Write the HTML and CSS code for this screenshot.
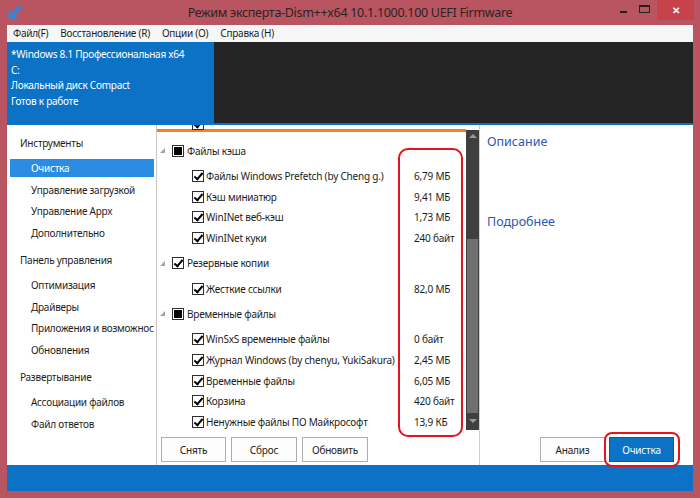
FILE: index.html
```html
<!DOCTYPE html>
<html lang="ru">
<head>
<meta charset="utf-8">
<title>Dism++</title>
<link rel="stylesheet" href="styles.css">
</head>
<body>
<div class="window">
  <div class="titlebar">
    <svg class="appicon" width="20" height="20" viewBox="0 0 20 20">
      <circle cx="6.5" cy="12" r="3.3" fill="#1f8fe6"/>
      <circle cx="6.5" cy="12" r="4.2" fill="none" stroke="#1f8fe6" stroke-width="2" stroke-dasharray="1.65 1.65"/>
      <circle cx="6.5" cy="12" r="1.3" fill="#b85560"/>
      <circle cx="12.5" cy="5.5" r="2.3" fill="#1f8fe6"/>
      <circle cx="12.5" cy="5.5" r="3.1" fill="none" stroke="#1f8fe6" stroke-width="1.6" stroke-dasharray="1.6 1.65"/>
      <circle cx="12.5" cy="5.5" r="0.9" fill="#b85560"/>
    </svg>
    <div class="title">Режим эксперта-Dism++x64 10.1.1000.100 UEFI Firmware</div>
    <div class="controls">
      <span class="ctl-min"></span>
      <span class="ctl-max"></span>
      <span class="ctl-close">✕</span>
    </div>
  </div>
  <div class="frame">
    <div class="menubar">
      <span>Файл(F)</span>
      <span>Восстановление (R)</span>
      <span>Опции (O)</span>
      <span>Справка (H)</span>
    </div>
    <div class="header">
      <div class="info">
        <div>*Windows 8.1 Профессиональная x64</div>
        <div>C:</div>
        <div>Локальный диск Compact</div>
        <div>Готов к работе</div>
      </div>
      <div class="console"></div>
    </div>
    <div class="main">
      <nav class="sidebar">
        <div class="sec">Инструменты</div>
        <div class="item active">Очистка</div>
        <div class="item">Управление загрузкой</div>
        <div class="item">Управление Appx</div>
        <div class="item">Дополнительно</div>
        <div class="sec">Панель управления</div>
        <div class="item">Оптимизация</div>
        <div class="item">Драйверы</div>
        <div class="item">Приложения и возможнос</div>
        <div class="item">Обновления</div>
        <div class="sec">Развертывание</div>
        <div class="item">Ассоциации файлов</div>
        <div class="item">Файл ответов</div>
      </nav>
      <section class="tree">
        <div class="treebox">
          <div class="list">
            <div class="cut"><span class="cb on"></span></div>
            <div class="rows">
              <div class="grp"><span class="exp"></span><span class="cb part"></span><span class="lbl">Файлы кэша</span></div>
              <div class="row"><span class="cb on"></span><span class="lbl">Файлы Windows Prefetch (by Cheng g.)</span><span class="size">6,79 МБ</span></div>
              <div class="row"><span class="cb on"></span><span class="lbl">Кэш миниатюр</span><span class="size">9,41 МБ</span></div>
              <div class="row"><span class="cb on"></span><span class="lbl">WinINet веб-кэш</span><span class="size">1,73 МБ</span></div>
              <div class="row"><span class="cb on"></span><span class="lbl">WinINet куки</span><span class="size">240 байт</span></div>
              <div class="grp"><span class="exp"></span><span class="cb on"></span><span class="lbl">Резервные копии</span></div>
              <div class="row"><span class="cb on"></span><span class="lbl">Жесткие ссылки</span><span class="size">82,0 МБ</span></div>
              <div class="grp"><span class="exp"></span><span class="cb part"></span><span class="lbl">Временные файлы</span></div>
              <div class="row"><span class="cb on"></span><span class="lbl">WinSxS временные файлы</span><span class="size">0 байт</span></div>
              <div class="row"><span class="cb on"></span><span class="lbl">Журнал Windows (by chenyu, YukiSakura)</span><span class="size">2,45 МБ</span></div>
              <div class="row"><span class="cb on"></span><span class="lbl">Временные файлы</span><span class="size">6,05 МБ</span></div>
              <div class="row"><span class="cb on"></span><span class="lbl">Корзина</span><span class="size">420 байт</span></div>
              <div class="row"><span class="cb on"></span><span class="lbl">Ненужные файлы ПО Майкрософт</span><span class="size">13,9 КБ</span></div>
            </div>
          </div>
          <div class="scroll">
            <span class="arr up"></span>
            <span class="thumb"></span>
            <span class="arr down"></span>
          </div>
          <div class="mark"></div>
        </div>
        <div class="btnrow">
          <button class="btn first">Снять</button>
          <button class="btn">Сброс</button>
          <button class="btn">Обновить</button>
        </div>
      </section>
      <aside class="details">
        <div class="h">Описание</div>
        <div class="h more">Подробнее</div>
        <div class="actions">
          <button class="btn">Анализ</button>
          <button class="btn primary">Очистка</button>
        </div>
      </aside>
    </div>
    <div class="statusbar"></div>
  </div>
</div>
</body>
</html>
```

FILE: styles.css
```css
* { box-sizing: border-box; }
html, body { margin: 0; padding: 0; }
body {
  width: 700px;
  height: 498px;
  overflow: hidden;
  background: #b85560;
  font-family: "Noto Sans", "Open Sans", sans-serif;
  color: #1c1c1c;
}
.window { width: 700px; height: 498px; background: #b85560; }

.titlebar {
  height: 25px;
  display: grid;
  grid-template-columns: 1fr auto 1fr;
  align-items: start;
}
.appicon { margin: 3px 0 0 6px; display: block; }
.title {
  font-size: 12.5px;
  letter-spacing: -0.3px;
  line-height: 26px;
  color: #2c2325;
  white-space: nowrap;
}
.controls {
  justify-self: end;
  display: flex;
  align-items: flex-start;
  margin-right: 6px;
}
.ctl-min { width: 7px; height: 2px; background: #222; margin: 11px 12px 0 0; }
.ctl-max { width: 11px; height: 8px; border: 1px solid #222; border-top-width: 2px; margin: 5px 7px 0 0; }
.ctl-close {
  width: 37px; height: 20px;
  background: #c6434b;
  color: #fff;
  font-size: 10px;
  font-weight: bold;
  line-height: 20px;
  text-align: center;
}

.frame { padding: 0 7px 7px 7px; }

.menubar {
  height: 17px;
  background: #f5f6f7;
  display: flex;
  gap: 12px;
  padding-left: 6px;
  font-size: 10px;
  letter-spacing: -0.25px;
  line-height: 17px;
  color: #1e1e1e;
}

.header { display: flex; height: 83px; }
.info {
  width: 207px;
  background: #0b72c5;
  color: #fff;
  font-size: 10px;
  letter-spacing: -0.25px;
  line-height: 15.5px;
  padding: 5px 0 0 4px;
  white-space: nowrap;
}
.console {
  flex: 1;
  background: #242424;
  border-bottom: 2px solid #0b72c5;
}

.main {
  height: 340px;
  display: grid;
  grid-template-columns: 150px 322px 1fr;
  background: #fff;
}

.sidebar {
  border-right: 1px solid #c9c9c9;
  padding: 8px 2px 0 3px;
  font-size: 10px;
  letter-spacing: -0.25px;
  white-space: nowrap;
  overflow: hidden;
}
.sec { height: 20px; line-height: 20px; padding-left: 10px; margin-bottom: 6px; margin-top: 8.5px; color: #1e1e1e; }
.sec:first-child { margin-top: 0; }
.item { height: 18px; line-height: 18px; padding-left: 21px; margin-bottom: 3.5px; color: #1e1e1e; overflow: hidden; }
.item.active { background: #2a8ce2; color: #fff; }

.tree { display: flex; flex-direction: column; }
.treebox { height: 305px; display: flex; position: relative; }
.list { flex: 1; overflow: hidden; font-size: 10px; letter-spacing: -0.2px; }
.cut {
  height: 7px;
  overflow: hidden;
  padding-left: 35px;
  background: linear-gradient(to bottom, transparent 4px, #f5811f 4px);
}
.cut .cb { margin-top: -7px; }
.rows { margin-top: 3.5px; }
.grp { height: 30px; display: flex; align-items: center; padding-left: 3px; }
.row { height: 20.7px; display: flex; align-items: center; padding-left: 35px; }
.exp {
  width: 0; height: 0;
  border-left: 5px solid transparent;
  border-bottom: 5px solid #a3a3a3;
  margin-right: 7px;
}
.grp .lbl { margin-left: 3px; }
.row .lbl { margin-left: 2px; flex: 1; white-space: nowrap; }
.size { width: 52px; white-space: nowrap; }

.cb {
  display: block;
  width: 12px; height: 12px;
  border: 1px solid #2e2e2e;
  background: #fff;
  position: relative;
  flex: none;
}
.cb.on::after {
  content: "";
  position: absolute;
  left: 3px; top: 0px;
  width: 3px; height: 7px;
  border: solid #000;
  border-width: 0 2px 2px 0;
  transform: rotate(40deg);
}
.cb.part::after {
  content: "";
  position: absolute;
  inset: 1px;
  background: #000;
}

.scroll {
  width: 13px;
  margin-top: 5px;
  background: #3f3f3f;
  display: flex;
  flex-direction: column;
  align-items: center;
}
.arr { width: 0; height: 0; border-left: 4px solid transparent; border-right: 4px solid transparent; }
.arr.up { border-bottom: 4px solid #9a9a9a; margin-top: 4px; }
.arr.down { border-top: 4px solid #9a9a9a; margin-top: 6px; }
.thumb { width: 11px; height: 174px; background: #6f6f6f; margin-top: 101px; }

.mark {
  position: absolute;
  left: 241px; top: 23px;
  width: 65px; height: 289px;
  border: 2px solid #e3141c;
  border-radius: 10px;
  pointer-events: none;
}

.btnrow { display: flex; gap: 5px; padding: 7px 0 3px 4px; }
.btn {
  width: 66px; height: 25px;
  background: #fdfdfd;
  border: 1px solid #adadad;
  font-family: "Noto Sans", "Open Sans", sans-serif;
  font-size: 10px;
  letter-spacing: -0.2px;
  color: #222;
  padding: 0;
}
.btn.first { width: 65px; }

.details {
  border-left: 1px solid #cfcfcf;
  padding: 8px 0 3px 7px;
  display: flex;
  flex-direction: column;
}
.h { font-size: 12.5px; line-height: 18px; color: #2d56b5; }
.h.more { margin-top: 62px; }
.actions {
  margin-top: auto;
  display: flex;
  justify-content: flex-end;
  gap: 4px;
  padding-right: 19px;
}
.actions .btn { width: 65px; }
.btn.primary {
  background: #0b72c5;
  border-color: #075a9e;
  color: #fff;
  position: relative;
}
.btn.primary::after {
  content: "";
  position: absolute;
  top: -6px; left: -6px; right: -7px; bottom: -6px;
  border: 2px solid #e3141c;
  border-radius: 8px;
}

.statusbar { height: 26px; background: #0b72c5; }
```
